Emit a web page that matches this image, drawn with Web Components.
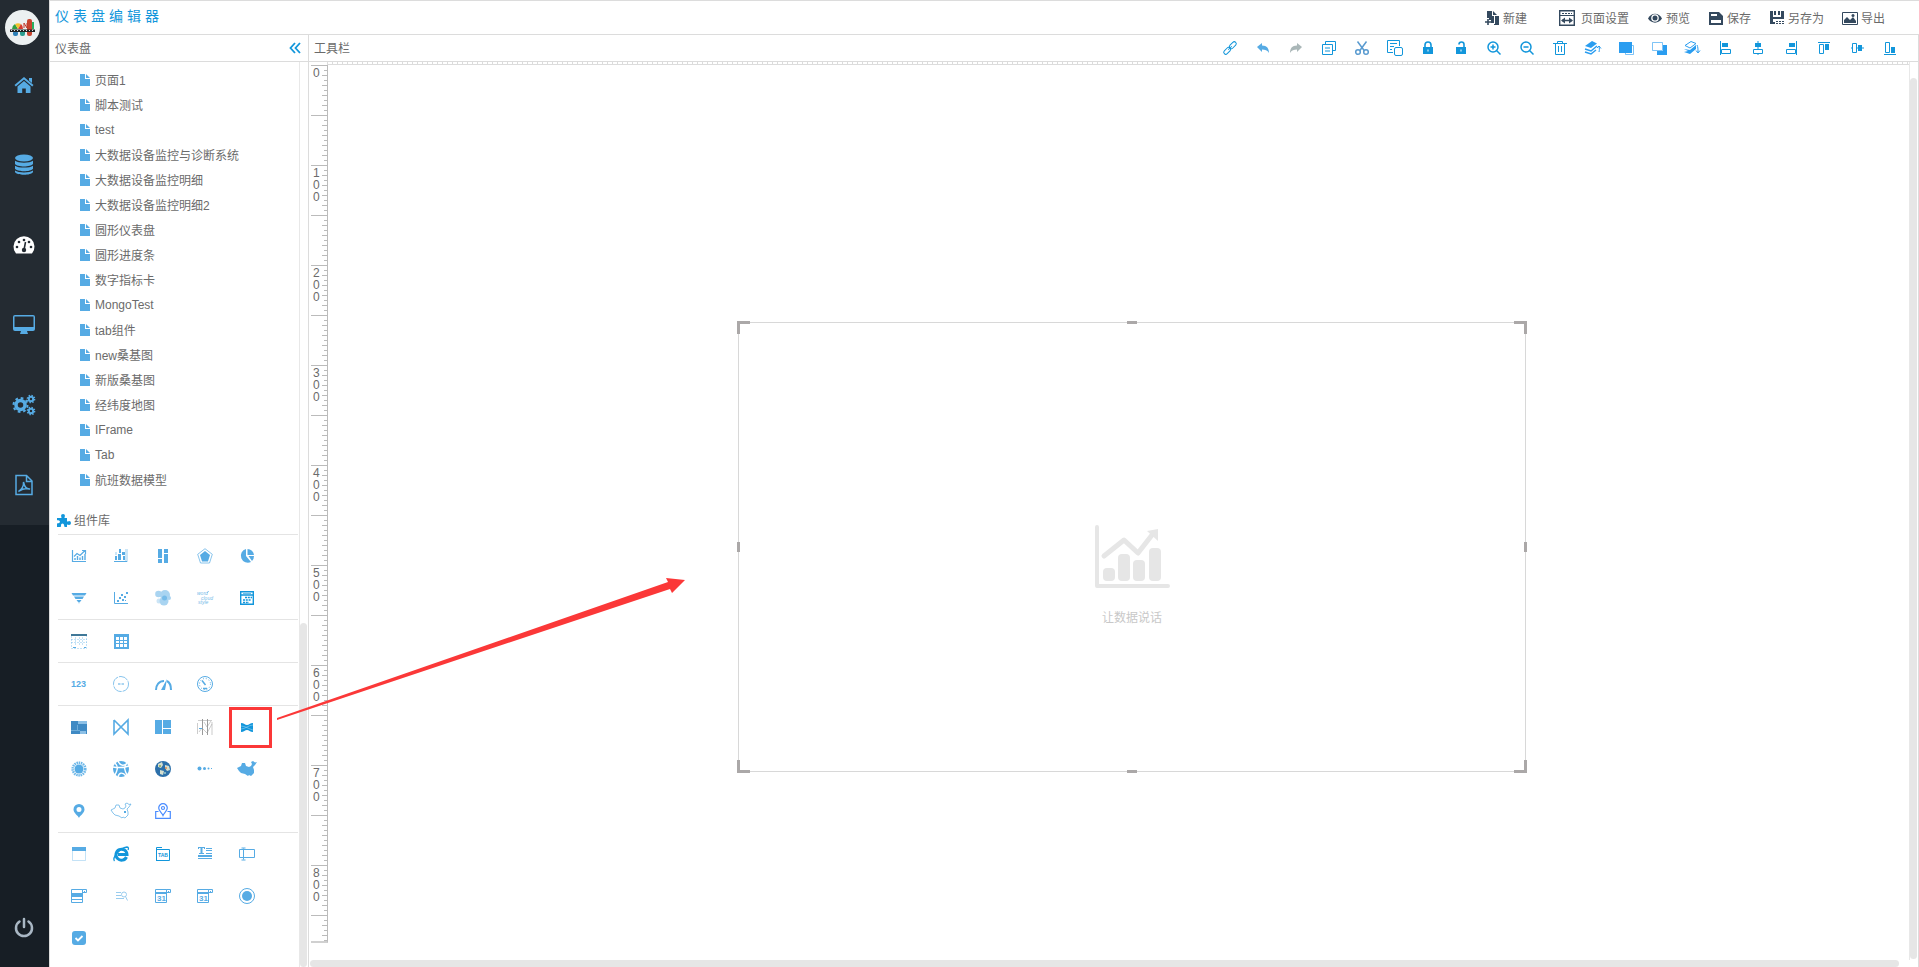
<!DOCTYPE html>
<html lang="zh-CN">
<head>
<meta charset="UTF-8">
<meta name="viewport" content="width=device-width, initial-scale=1">
<title>仪表盘编辑器</title>
<style>
  html, body {
    margin: 0;
    height: 100%;
    overflow: hidden;
  }

  body {
    font-family: "Liberation Sans", "Noto Sans CJK SC", sans-serif;
    font-size: 12px;
    color: #6b6b6b;
    --accent: #56abe4;
    --strong: #1296db;
    --dark: #34495e;
    --line: #dcdcdc;
    --thumb: #e6e6e6;
  }
</style>
</head>
<body>
<dash-app></dash-app>

<script>
// name: [size, markup]. The viewBox is always square and equal to the size.
const ICONS = {
  // side navigation
  logo: [35, `
    <circle cx="17.5" cy="17.5" r="17.5" fill="#ecf0f1"/>
    <path d="M7 19a6 6 0 0 1 3-5l3 5z" fill="#2f9e44"/>
    <path d="M10 14a6 6 0 0 1 6 0l-3 5z" fill="#f2c230"/>
    <path d="M16 14a6 6 0 0 1 2 5h-5z" fill="#d63a2f"/>
    <rect x="8" y="21" width="5" height="5" rx="2" fill="#2c7fb8"/>
    <rect x="15" y="20" width="5" height="6" rx="2" fill="#2a9d8f"/>
    <rect x="22" y="9" width="5" height="17" rx="2" fill="#c8442f"/>
    <path d="M19 18v-5l3 5v-5" fill="none" stroke="#c0392b"/>
    <path d="M28 12v7" stroke="#27ae60" stroke-width="2"/>
    <path d="M5 19.500h25v2.500H5z" fill="#222"/>
    <path d="M6 20.500h24" stroke="#dfe4e6" stroke-dasharray="1 2"/>`],
  home: [24, `<path d="M12 4l9.500 8-1.300 1.400L12 6.600l-8.200 6.800L2.500 12zM17 5h3v5l-3-2.500z"/><path d="M12 8l6.500 5.500V20h-4.700v-4.500h-3.600V20H5.500v-6.500z"/>`],
  data: [24, `<ellipse cx="12" cy="5" rx="9" ry="3.500"/><path d="M3 7.800c3 2.500 15 2.500 18 0V11c-2 3.300-16 3.300-18 0zM3 12.700c3 2.500 15 2.500 18 0v3.100c-2 3.300-16 3.300-18 0zM3 17.500c3 2.500 15 2.500 18 0V19c-2 3.700-16 3.700-18 0z"/>`],
  gauge: [24, `<path d="M4 20.500A10.500 10.500 0 1 1 20 20.500z"/><g fill="#242b32"><circle cx="5" cy="14" r="1.300"/><circle cx="7" cy="9" r="1.300"/><circle cx="12" cy="7" r="1.300"/><circle cx="17" cy="9" r="1.300"/><circle cx="19" cy="14" r="1.300"/><circle cx="12" cy="17" r="2.200"/></g><path d="M12 17l1.500-8" stroke="#242b32" stroke-width="1.500"/>`],
  desktop: [24, `<path d="M3 2h18a2 2 0 0 1 2 2v12a2 2 0 0 1-2 2h-6l1 3H8l1-3H3a2 2 0 0 1-2-2V4a2 2 0 0 1 2-2zm-.500 1.500v10.500h19V3.500z" fill-rule="evenodd"/>`],
  cogs: [24, `<g fill="none"><circle cx="8.500" cy="12" r="4.500" stroke-width="3.500"/><circle cx="8.500" cy="12" r="7" stroke-width="2" stroke-dasharray="2.700 2.800"/><circle cx="19" cy="6" r="2.200" stroke-width="2"/><circle cx="19" cy="6" r="3.600" stroke-width="1.500" stroke-dasharray="1.400 1.430"/><circle cx="19" cy="18" r="2.200" stroke-width="2"/><circle cx="19" cy="18" r="3.600" stroke-width="1.500" stroke-dasharray="1.400 1.430"/></g>`],
  pdf: [24, `<g fill="none" stroke-width="1.500"><path d="M4 2.500h10.500l5.500 5.500v13.500H4zM14.500 2.500v6H20"/><path d="M6.500 18.500c3-1.500 5.500-5.500 5-9.500 1 5 3 7.300 6.500 7-4-1-7.500-.300-11.500 2.500z"/></g>`],
  power: [24, `<g fill="none" stroke-width="2.500" stroke-linecap="round"><path d="M7.500 6.500a8 8 0 1 0 9 0M12 4v8"/></g>`],

  // header
  fresh: [16, `<path d="M3 1h5v5h2v7H7v-3H5V8H3z"/><path d="M9 1l4 4H9zM11 6h4v9h-5v-1h1z"/><path d="M4 9v6M1 12h6" stroke-width="1.600"/>`],
  page: [16, `<path d="M.700.700h14.600v14.600H.700z" fill="none" stroke-width="1.400"/><path d="M1 5.500h14"/><path d="M3 3.500h10" stroke-dasharray="2 1"/><path d="M3 10.500h10" stroke-width="1.500"/><path d="M6 7.500l-4 3 4 3zM10 7.500l4 3-4 3z"/>`],
  eye: [16, `<path d="M1 8.500C4 2 12 2 15 8.500 12 14 4 14 1 8.500z"/><circle cx="8" cy="8" r="3.800" fill="#fff"/><circle cx="8" cy="8" r="2.500"/>`],
  save: [16, `<path d="M1 2h10l4 4v9H1zM3 4v2h6V4zM3 10v3h10v-3z" fill-rule="evenodd"/>`],
  saveas: [16, `<path d="M1 1h3v6h8V1h3v8H4v3h2v2H1zM5 1h2v4H5zM9 1h2v4H9z"/><path d="M7 11h2v1H7zM10 11h2v1h-2zM13 11h2v1h-2zM7 13h2v1H7zM10 13h2v1h-2zM13 13h2v1h-2z"/>`],
  image: [16, `<path d="M.500 2.500h15v12H.500z" fill="none"/><path d="M2 13v-3l3-3 3 3 3-3 3 4v2z"/><circle cx="11" cy="5.500" r="1.500"/>`],

  // toolbar
  collapse: [16, `<path d="M8 3L3.500 8 8 13M13 3L8.500 8 13 13" fill="none" stroke-width="1.800"/>`],
  link: [16, `<g fill="none" transform="rotate(-45 8 8)"><rect x="0" y="6" width="8" height="4" rx="2"/><rect x="8" y="6" width="8" height="4" rx="2"/><path d="M5.500 8h5"/></g>`],
  undo: [16, `<path d="M2 7l5-4v2.500c5 0 7 3 7 7.500-1.500-3-4-3.500-7-3.500V12z"/>`],
  redo: [16, `<path d="M14 7L9 3v2.500C4 5.500 2 8.500 2 13c1.500-3 4-3.500 7-3.500V12z"/>`],
  copy: [16, `<path d="M4.500 4.500V1.500h10v9h-3M1.500 4.500h10v10h-10zM4 8h5M4 11h5" fill="none"/>`],
  cut: [16, `<g fill="none" stroke-width="1.500"><path d="M3.500 1.500L10.500 11M12.500 1.500L5.500 11"/><circle cx="4" cy="12" r="2.300"/><circle cx="12" cy="12" r="2.300"/></g>`],
  paste: [16, `<path d="M6 12.500H.500V.500h12V6M3 3.500h7M3 6.500h4M3 9.500h2" fill="none"/><rect x="7.500" y="7.500" width="8" height="8" rx="1.500" fill="none"/>`],
  lock: [16, `<path d="M3 7h10v7H3z"/><path d="M5 7V5a3 3 0 0 1 6 0v2" fill="none" stroke-width="1.600"/><path d="M8 9.500v2" stroke="#fff"/>`],
  unlock: [16, `<path d="M3 7h10v7H3z"/><path d="M6 4.500a2.500 2.500 0 0 1 5 0V7" fill="none" stroke-width="1.600"/><path d="M8 9.500v2" stroke="#fff"/>`],
  zoomin: [16, `<g fill="none" stroke-width="1.500"><circle cx="7" cy="7" r="5"/><path d="M10.500 10.500l4 4M4.500 7h5M7 4.500v5"/></g>`],
  zoomout: [16, `<g fill="none" stroke-width="1.500"><circle cx="7" cy="7" r="5"/><path d="M10.500 10.500l4 4M4.500 7h5"/></g>`],
  trash: [16, `<path d="M1 3.500h14M5.500 3V1.500h5V3M3.500 4v10.500h9V4M6.500 6v6M9.500 6v6" fill="none"/>`],
  up: [16, `<path d="M0 6l7-5 5 2.500L6 8z"/><path d="M0 9l6 2 6-5M0 12l6 2 5-4" fill="none" stroke-width="1.500"/><path d="M14 12c.500-2 .500-3 0-6M12 8l2-2 2 2.500" fill="none"/>`],
  front: [16, `<path d="M14 5.500h1.500v9h-8V13" fill="none" opacity=".6"/><path d="M1 2h13v11H1z"/>`],
  back: [16, `<path d="M12 5h4v10H6v-4h6z"/><path d="M1.500 2.500h10v8h-10z" fill="none" opacity=".6"/>`],
  down: [16, `<path d="M1 5.500l6-4 5 2-6 4.500z" fill="none"/><path d="M0 9l6 1 6-5v4l-6 5-6-2 4-1z"/><path d="M13 5c1 2 1 4 1 7M12 10.500l2 2.500 2-2.500" fill="none"/>`],
  aleft: [16, `<path d="M3 1h1v14H3zM5 3h6v4H5z"/><path d="M4.500 9.500h9v4h-9z" fill="none"/>`],
  acenter: [16, `<path d="M8 1v14"/><path d="M5 3h6v4H5z"/><path d="M3.500 9.500h9v4h-9z" fill="#fff"/>`],
  aright: [16, `<path d="M13 1h1v14h-1zM6 3h6v4H6z"/><path d="M3.500 9.500h9v4h-9z" fill="none"/>`],
  atop: [16, `<path d="M2 2h12v1H2zM9 4h4v6H9z"/><path d="M3.500 4.500h4v9h-4z" fill="none"/>`],
  amiddle: [16, `<path d="M2 8h13"/><path d="M9 5h4v6H9z"/><path d="M3.500 3.500h4v9h-4z" fill="#fff"/>`],
  abottom: [16, `<path d="M2 14h12v1H2zM9 7h4v6H9z"/><path d="M3.500 2.500h4v10h-4z" fill="none"/>`],

  // panel
  file: [12, `<path d="M1 0h5v5h5v7H1zM7 0v4h4z"/>`],
  puzzle: [16, `<path d="M1 6h4c1 0 .500-1 0-2a2 2 0 1 1 4 0c-.500 1-1 2 0 2h2v3c0 1 1 .500 2 0a2 2 0 1 1 0 4c-1-.500-2-1-2 0v2H9c-1 0-.500-1-1-2a1.500 1.500 0 0 0-3 0c0 1 .500 2-1 2H1v-3c0-1 1-.500 2-1a1.300 1.300 0 0 0 0-2.500C2 8 1 8.500 1 8z"/>`],

  // component library
  line: [16, `<path d="M1.500 2v11.500H15" fill="none" stroke-width="1.200"/><path d="M3 8.500l3-3 3 2 5-5M11 2.500h3.500V6" fill="none" stroke-width="1.200"/><path d="M4 12v-2M6.500 12V8M9 12V9.500M11.500 12V8M14 12V6" stroke-width="1.400"/>`],
  stack: [16, `<path d="M1 13h13v1H1z"/><path d="M2 8h2v4H2zM6 1h2v4H6zM5 6h3v6H5zM9 4h3v3H9zM10 8h2v4h-2z"/><path d="M2 4h2v3H2zM12 1h3v13h-3z" opacity=".3"/>`],
  blocks: [16, `<path d="M3 1h4v9H3zM3 11h4v4H3zM9 1h4v4H9zM9 6h4v9H9z"/>`],
  radar: [16, `<path d="M8 .700l7.300 5.600L12.500 15h-9L.700 6.300z" fill="none" opacity=".7"/><path d="M8 3l5 4-2 6.500H5L3 7z"/>`],
  pie: [16, `<path d="M7 1v7l5 6a7 7 0 1 1-5-13z"/><path d="M8.500 1a6.500 6.500 0 0 1 6.500 6L8.500 7zM9.500 8H15a7 7 0 0 1-2 5z"/>`],
  funnel: [16, `<path d="M.500 3h15L14 5.500H2zM3 6.500h10L11.500 9h-7zM5.500 10h5L9 12H7zM7 12.500h2l-1 1z"/>`],
  scatter: [16, `<path d="M1.500 2v11.500H15" fill="none"/><path d="M4 10h2v2H4zM6 7h2v2H6zM9 9h2v2H9zM8 4h2v2H8zM11 6h2v2h-2zM13 2h2v2h-2zM12 10h1v1h-1z"/>`],
  bubble: [16, `<g opacity=".5"><circle cx="3.500" cy="4" r="3.300"/><circle cx="10" cy="5" r="5"/><circle cx="9" cy="11" r="4.500"/><circle cx="4" cy="11" r="2.500" opacity=".6"/><circle cx="14" cy="8" r="2"/></g><circle cx="9.500" cy="8" r="2.500" opacity=".6"/>`],
  cloud: [16, `<g stroke="none" font-size="5" font-style="italic" opacity=".8"><text x="0" y="5">word</text><text x="4" y="10">cloud</text><text x="1" y="14">style</text></g><path d="M10 3l2-2" opacity=".5"/>`],
  calendar: [16, `<path d="M1.700 1.700h12.600v12.600H1.700zM2 5h12" fill="none" stroke-width="1.400"/><path d="M4 3.500h8" opacity=".6"/><path d="M6 7.500h7M4 10h8M4 12.500h6" stroke-width="1.500" stroke-dasharray="2 .8"/>`],
  sheet: [16, `<path d="M0 1h16v2H0z" fill="#3f7898" stroke="none"/><g opacity=".35" fill="none"><path d="M.500 3v12.500h15V3M0 6.500h16M0 9.500h16M4.500 4v8M8.500 4v8M11.500 4v8" stroke-dasharray="2 1"/></g><path d="M2 14.500h3M13 14.500h2" />`],
  table: [16, `<path d="M1 1h15v15H1zM3 4v3h3V4zM7 4v3h3V4zM11 4v3h3V4zM3 8v2h3V8zM7 8v2h3V8zM11 8v2h3V8zM3 11v3h3v-3zM7 11v3h3v-3zM11 11v3h3v-3z" fill-rule="evenodd"/>`],
  number: [16, `<text x="0" y="11" font-size="9" font-weight="bold">123</text>`],
  ring: [16, `<circle cx="8" cy="8" r="7.500" fill="none" opacity=".7" stroke-dasharray="10 1"/><path d="M5 8h2.500M8.500 8H11" />`],
  meter: [16, `<path d="M1 14c0-5 3-9 8-9" fill="none" stroke-width="2"/><path d="M12 5c2 1 4 4 4 9" fill="none" stroke-width="2"/><path d="M6 14l6-11-2 11z"/>`],
  dial: [16, `<circle cx="8" cy="8" r="7.500" fill="none"/><circle cx="8" cy="8" r="5.500" fill="none" stroke-dasharray="1 1.900"/><path d="M5 4.500L8.500 9M6 12.500h4" stroke-width="1.500"/>`],
  treemap: [16, `<path d="M0 2h16v13H0z" fill="#3f8ac4" stroke="none"/><path d="M7 2h9v3H7zM9 12h6v3H9z" fill="#8cc0e6" stroke="none"/><path d="M0 11.500h9M6.500 6v6" stroke="#6fadd9" fill="none"/>`],
  bowtie: [16, `<path d="M1 1v14L15 1v14L1 1" fill="none" stroke-width="1.600"/>`],
  layout: [16, `<path d="M0 1h7v14H0zM8 1h8v8H8zM8 10h8v5H8z"/>`],
  parallel: [16, `<g stroke="#9a9a9a" fill="none"><path d="M5.500 0v16M10.500 0v16" stroke-width="1"/><path d="M1 1.500h14M.500 4v11M15 3v13M2 13l3-4 5 5 5-9M7 3l3 5 4-6" opacity=".5"/></g><path d="M2 9.500h3"/>`],
  sankey: [16, `<path d="M2 4c3 0 4 2 6 2s3-2 6-2v9c-3 0-4-2-6-2s-3 2-6 2z"/><path d="M2 7c4 0 8 3 12 4M2 10c4 0 8-4 12-4" stroke="#8ed0f4" fill="none" stroke-width=".6"/>`],
  sunburst: [16, `<circle cx="8" cy="8" r="4.500"/><circle cx="8" cy="8" r="6.300" fill="none" stroke-width="2.600" stroke-dasharray="1.500 .7" opacity=".85"/>`],
  chord: [16, `<circle cx="8" cy="8" r="8" stroke="none"/><g stroke="#fff" fill="none" stroke-width="1.400"><path d="M2 2c4 4 2 8 0 12M14 2c-4 4-2 8 0 12M5 0c2 5 6 5 8 3M0 6c6 1 10 1 16-1M5 16c1-5 5-5 8-1"/></g>`],
  globe: [16, `<circle cx="8" cy="8" r="8" fill="#2c70aa" stroke="none"/><path d="M3 3l4-2 1 3-2 3-3-1zM10 4l4 1 1 4-3 1-2-3zM5 9l4 1-1 4-3-1z" fill="#d5dfd0" stroke="none"/><circle cx="11" cy="7" r="1" fill="#e38b4a" stroke="none"/><circle cx="5" cy="5" r="1" fill="#85a857" stroke="none"/><circle cx="10" cy="12" r="1" fill="#9cc" stroke="none"/>`],
  dots: [16, `<circle cx="2.500" cy="7.500" r="2"/><circle cx="7.500" cy="7.500" r="1.500"/><circle cx="11.500" cy="7.500" r="1"/><path d="M14 7h1v1h-1z"/>`],
  china: [20, `<path d="M0 9l4-2 1-3 3 0 1 3 3 1 2-1 1-2-1-2 2-1 2 1.500 2-.500-2 3-2 2 1 3 0 3-3 3-2-1-1 1-3-2-4-1-2-2z"/>`],
  pin: [16, `<path d="M8 1a5.500 5.500 0 0 1 5.500 5.500C13.500 10 9 12.500 8 15c-1-2.500-5.500-5-5.500-8.500A5.500 5.500 0 0 1 8 1zm0 3a2.500 2.500 0 1 0 0 5 2.500 2.500 0 0 0 0-5z"/>`],
  chinaline: [20, `<path d="M0 9l4-2 1-3 3 0 1 3 3 1 2-1 1-2-1-2 2-1 2 1.500 2-.500-2 3-2 2 1 3 0 3-3 3-2-1-1 1-3-2-4-1-2-2z" fill="none" opacity=".7"/><path d="M13 10h2v2h-2z"/>`],
  pintray: [16, `<g fill="none" stroke-width="1.200"><path d="M3.500 8.500H.700v6.800h14.600V8.500h-2.800"/><path d="M8 .700a4.300 4.300 0 0 1 4.300 4.300C12.300 8 9 10 8 12.500 7 10 3.700 8 3.700 5A4.300 4.300 0 0 1 8 .700z"/><circle cx="8" cy="5" r="1.500"/></g>`],
  panel: [16, `<path d="M1.500 5v9.500h13V5" fill="none" opacity=".35"/><path d="M1 1h14v4H1z"/>`],
  iframe: [16, `<path d="M13.500 11a5.500 5.500 0 1 1 .500-2.500H5" fill="none" stroke-width="3"/><path d="M1.500 15C-1 12 6 2 14 1c2 0 1.500 2 1 3" fill="none" stroke-width="1.300"/>`],
  tab: [16, `<path d="M1.500 15V1.500H7M1.500 3.500h13v11h-13z" fill="none"/><text x="3" y="11" font-size="5" font-weight="bold" stroke="none">TAB</text>`],
  text: [16, `<path d="M1 1h7v2H7V2H5.500v5H7v1H2V7h1.500V2H2v1H1z"/><path d="M9 2h6v1H9zM9 4h6v1H9zM9 7h6v1H9zM1 9h14v2H1zM1 12h14v1H1z"/>`],
  input: [16, `<path d="M.500 3.500h15v8H.500zM4.500 2.500v11M2.500 2h4M2.500 14h4" fill="none"/>`],
  select: [16, `<path d="M.500 1.500h11v13H.500zM11.500 1.500h4v3h-4zM0 11.500h12" fill="none"/><path d="M1 5h11v4H1zM13 3h1v1h-1z"/>`],
  find: [16, `<g opacity=".6" fill="none"><path d="M3 4.500h5M3 7.500h5M3 10.500h8"/><circle cx="11" cy="6.500" r="2.500"/><path d="M12.500 8.500l2 4"/></g>`],
  date: [16, `<path d="M.500 1.500h11v13H.500zM11.500 1.500h4v3h-4z" fill="none"/><path d="M1 4h11v2H1zM13 3h1v1h-1z"/><text x="2" y="13" font-size="8" font-weight="bold" stroke="none">31</text>`],
  radio: [16, `<circle cx="8" cy="8" r="7.500" fill="none"/><circle cx="8" cy="8" r="5"/>`],
  check: [16, `<rect x="1" y="1" width="14" height="14" rx="3"/><path d="M4.500 8l2.500 2.500L11.500 6" stroke="#fff" stroke-width="1.800" fill="none"/>`]
};

class UiIcon extends HTMLElement {
  constructor() {
    super();
    this.attachShadow({ mode: "open" });
  }

  connectedCallback() {
    const [size, markup] = ICONS[this.getAttribute("name")];
    this.shadowRoot.innerHTML = /* html */`
    <style>
      :host { display: block; flex: none; }
      svg { display: block; overflow: visible; fill: currentColor; }
      .ink { stroke: currentColor; }
    </style>
    <svg width="${size}" height="${size}" viewBox="0 0 ${size} ${size}" aria-hidden="true">${UiIcon.ink(markup)}</svg>`;
  }

  // solid shapes carry no outline: only unfilled ones and bare strokes do
  static ink(markup) {
    const box = document.createElement("template");
    box.innerHTML = `<svg>${markup}</svg>`;
    box.content.querySelectorAll("path, circle, rect, ellipse").forEach((el) => {
      const hollow = el.closest('[fill="none"]');
      const thin = el.tagName === "path" && !/z/i.test(el.getAttribute("d"));
      const outlined = el.getAttribute("fill") === "#fff" && el.tagName === "path";
      if (!el.closest("[stroke]") && (hollow || thin || outlined)) {
        el.setAttribute("class", "ink");
      }
    });
    return box.content.firstChild.innerHTML;
  }
}

class SideNav extends HTMLElement {
  constructor() {
    super();
    this.attachShadow({ mode: "open" });
  }

  static get styles() {
    return /* css */`
      :host {
        display: flex;
        flex-direction: column;
        justify-content: space-between;
        background: #171e25;
        color: var(--accent);
        border-right: 1px solid var(--line);
      }

      nav {
        background: #242b32;
        display: flex;
        flex-direction: column;
      }

      .logo {
        height: 45px;
        padding: 10px 5px 0;
        box-sizing: border-box;
      }

      a, button {
        height: 80px;
        display: flex;
        align-items: center;
        justify-content: center;
        color: inherit;
        background: none;
        border: 0;
        padding: 0 1px 0 0;
      }

      a[aria-current] { color: #fff; }
      button { color: #a9b7c4; }
    `;
  }

  connectedCallback() {
    const items = [["home", "首页"], ["data", "数据"], ["gauge", "仪表盘"], ["desktop", "大屏"], ["cogs", "设置"], ["pdf", "报表"]];
    this.shadowRoot.innerHTML = /* html */`
    <style>${SideNav.styles}</style>
    <nav>
      <div class="logo"><ui-icon name="logo"></ui-icon></div>
      ${items.map(([icon, label]) => `<a href="#${icon}" aria-label="${label}" ${icon === "gauge" ? 'aria-current="page"' : ""}><ui-icon name="${icon}"></ui-icon></a>`).join("")}
    </nav>
    <button type="button" aria-label="退出"><ui-icon name="power"></ui-icon></button>`;
  }
}

class AppHeader extends HTMLElement {
  constructor() {
    super();
    this.attachShadow({ mode: "open" });
  }

  static get styles() {
    return /* css */`
      :host {
        display: flex;
        align-items: center;
        justify-content: space-between;
        height: 35px;
        box-sizing: border-box;
        border: solid var(--line);
        border-width: 1px 0;
        padding: 0 34px 0 5px;
      }

      h1 {
        margin: 0 0 6px;
        font-size: 14px;
        font-weight: normal;
        letter-spacing: 4px;
        color: var(--strong);
      }

      .actions {
        display: flex;
        gap: 18px;
      }

      button {
        display: flex;
        align-items: center;
        gap: 3px;
        border: 0;
        padding: 0;
        background: none;
        font: inherit;
        color: inherit;
      }

      .wide { gap: 6px; }
      button:first-child { margin-right: 14px; }
      ui-icon { color: var(--dark); }
    `;
  }

  connectedCallback() {
    const items = [["fresh", "新建"], ["page", "页面设置"], ["eye", "预览"], ["save", "保存"], ["saveas", "另存为"], ["image", "导出"]];
    this.shadowRoot.innerHTML = /* html */`
    <style>${AppHeader.styles}</style>
    <h1><slot></slot></h1>
    <div class="actions">
      ${items.map(([icon, label]) => `<button type="button" class="${icon === "page" ? "wide" : ""}"><ui-icon name="${icon}"></ui-icon>${label}</button>`).join("")}
    </div>`;
  }
}

class PanelHead extends HTMLElement {
  constructor() {
    super();
    this.attachShadow({ mode: "open" });
    this.shadowRoot.innerHTML = /* html */`
    <style>
      :host {
        display: flex;
        align-items: center;
        justify-content: space-between;
        flex: none;
        height: 27px;
        box-sizing: border-box;
        border-bottom: 1px solid var(--line);
        padding-left: 5px;
      }

      h2 {
        margin: 0 0 2px;
        font-size: 12px;
        font-weight: normal;
      }
    </style>
    <h2><slot></slot></h2>
    <slot name="tools"></slot>`;
  }
}

class PageTree extends HTMLElement {
  constructor() {
    super();
    this.attachShadow({ mode: "open" });
  }

  connectedCallback() {
    const pages = ["页面1", "脚本测试", "test", "大数据设备监控与诊断系统", "大数据设备监控明细", "大数据设备监控明细2",
      "圆形仪表盘", "圆形进度条", "数字指标卡", "MongoTest", "tab组件", "new桑基图", "新版桑基图", "经纬度地图",
      "IFrame", "Tab", "航班数据模型"];
    this.shadowRoot.innerHTML = /* html */`
    <style>
      :host { display: block; padding: 5px 0 15px 29px; }
      ul { list-style: none; margin: 0; padding: 0; }
      a {
        display: flex;
        align-items: center;
        gap: 4px;
        height: 25px;
        color: inherit;
        text-decoration: none;
      }
      ui-icon { color: var(--accent); }
    </style>
    <ul>${pages.map((page) => `<li><a href="#"><ui-icon name="file"></ui-icon>${page}</a></li>`).join("")}</ul>`;
  }
}

class ComponentLibrary extends HTMLElement {
  constructor() {
    super();
    this.attachShadow({ mode: "open" });
  }

  static get styles() {
    return /* css */`
      :host {
        display: block;
        padding: 0 1px 0 8px;
      }

      h3 {
        display: flex;
        align-items: center;
        gap: 2px;
        height: 25px;
        margin: 0 0 0 -2px;
        padding-bottom: 2px;
        font-size: 12px;
        font-weight: normal;
      }

      h3 ui-icon { color: var(--strong); }

      .group {
        display: grid;
        grid-template-columns: repeat(5, 42px);
        grid-auto-rows: 42px;
        border-top: 1px solid #e4e4e4;
      }

      button {
        display: grid;
        place-items: center;
        position: relative;
        padding: 0;
        border: 0;
        background: none;
        color: var(--accent);
        font: inherit;
      }

      .strong { color: var(--strong); }
      .vivid { color: #4a8cff; }

      .marked::after {
        content: "";
        position: absolute;
        inset: 1px -4px 0 3px;
        border: 3px solid #fb3838;
      }
    `;
  }

  connectedCallback() {
    const groups = [
      ["line", "stack", "blocks", "radar", "pie", "funnel", "scatter", "bubble", "cloud", "calendar"],
      ["sheet", "table"],
      ["number", "ring", "meter", "dial"],
      ["treemap", "bowtie", "layout", "parallel", "sankey", "sunburst", "chord", "globe", "dots", "china", "pin", "chinaline", "pintray"],
      ["panel", "iframe", "tab", "text", "input", "select", "find", "date", "date", "radio", "check"]
    ];
    const tone = { calendar: "strong", sankey: "strong marked", iframe: "strong", tab: "strong", pintray: "vivid" };
    this.shadowRoot.innerHTML = /* html */`
    <style>${ComponentLibrary.styles}</style>
    <h3><ui-icon name="puzzle"></ui-icon>组件库</h3>
    ${groups.map((group) => `<div class="group">${group.map((name) => `<button type="button" aria-label="${name}" class="${tone[name] ?? ""}"><ui-icon name="${name}"></ui-icon></button>`).join("")}</div>`).join("")}`;
  }
}

class SidePanel extends HTMLElement {
  constructor() {
    super();
    this.attachShadow({ mode: "open" });
    this.shadowRoot.innerHTML = /* html */`
    <style>
      :host {
        display: flex;
        flex-direction: column;
        width: 259px;
        box-sizing: border-box;
        border-right: 1px solid var(--line);
        min-height: 0;
      }

      .body {
        flex: 1;
        display: flex;
        min-height: 0;
      }

      .content {
        flex: 1;
        overflow: hidden;
      }

      .track {
        width: 8px;
        display: flex;
        flex-direction: column;
        border-left: 1px solid #e8e8e8;
      }

      .rest { flex: 62; }
      .thumb {
        flex: 38;
        width: 7px;
        border-radius: 4px;
        background: var(--thumb);
      }

      button {
        border: 0;
        background: none;
        padding: 0 5px;
        color: var(--strong);
      }
    </style>
    <panel-head>仪表盘<button slot="tools" type="button" aria-label="收起"><ui-icon name="collapse"></ui-icon></button></panel-head>
    <div class="body">
      <div class="content"><slot></slot></div>
      <div class="track"><div class="rest"></div><div class="thumb"></div></div>
    </div>`;
  }
}

class ToolBar extends HTMLElement {
  constructor() {
    super();
    this.attachShadow({ mode: "open" });
  }

  connectedCallback() {
    const tools = ["link", "undo", "redo", "copy", "cut", "paste", "lock", "unlock", "zoomin", "zoomout", "trash",
      "up", "front", "back", "down", "aleft", "acenter", "aright", "atop", "amiddle", "abottom"];
    this.shadowRoot.innerHTML = /* html */`
    <style>
      :host { display: flex; padding-right: 12px; }
      button {
        width: 33px;
        height: 26px;
        display: grid;
        place-items: center;
        border: 0;
        padding: 0;
        background: none;
        color: var(--strong);
      }
      .undo { color: var(--accent); }
      .cut { color: #5a9bd0; }
      .redo { color: #aab7b8; }
      .front, .back, .up, .down { color: #2a9df0; }
    </style>
    ${tools.map((name) => `<button type="button" class="${name}" aria-label="${name}"><ui-icon name="${name}"></ui-icon></button>`).join("")}`;
  }
}

class RulerY extends HTMLElement {
  constructor() {
    super();
    this.attachShadow({ mode: "open" });
  }

  connectedCallback() {
    const marks = [0, 100, 200, 300, 400, 500, 600, 700, 800];
    this.shadowRoot.innerHTML = /* html */`
    <style>
      :host {
        display: block;
        overflow: hidden;
        border-right: 1px solid #bbb;
        border-bottom: 2px solid #d0d0d0;
        background:
          repeating-linear-gradient(#bbb 0 1px, transparent 1px 50px),
          repeating-linear-gradient(#bbb 0 1px, transparent 1px 10px) right / 5px 100% no-repeat,
          repeating-linear-gradient(#bbb 0 1px, transparent 1px 5px) right / 3px 100% no-repeat;
      }

      div {
        width: 7px;
        height: 98px;
        padding: 2px 2px 0;
        line-height: 12px;
        word-break: break-all;
      }
    </style>
    ${marks.map((mark) => `<div>${mark}</div>`).join("")}`;
  }
}

class ArtBoard extends HTMLElement {
  constructor() {
    super();
    this.attachShadow({ mode: "open" });
    this.shadowRoot.innerHTML = /* html */`
    <style>
      :host {
        display: flex;
        flex-direction: column;
        align-items: center;
        justify-content: center;
        gap: 20px;
        position: relative;
        box-sizing: border-box;
        width: 49%;
        aspect-ratio: 7 / 4;
        padding-top: 54px;
        border: 1px solid #d8d8d8;
        color: #c8c8c8;
      }

      svg { display: block; }

      i {
        position: absolute;
        width: 10px;
        height: 10px;
        border: 0 solid #aba8a8;
      }

      .n { top: -2px; border-top-width: 3px; }
      .s { bottom: -2px; border-bottom-width: 3px; }
      .w { left: -2px; border-left-width: 3px; }
      .e { right: -2px; border-right-width: 3px; }
      .x { left: calc(50% - 5px); }
      .y { top: calc(50% - 5px); }
    </style>
    <i class="n w"></i><i class="n x"></i><i class="n e"></i>
    <i class="w y"></i><i class="e y"></i>
    <i class="s w"></i><i class="s x"></i><i class="s e"></i>
    <svg width="76" height="64" viewBox="0 0 76 64" fill="#e6e6e6" aria-hidden="true">
      <path d="M3 3v59h71" fill="none" stroke="#e6e6e6" stroke-width="4" stroke-linecap="round" stroke-linejoin="round"/>
      <rect x="9" y="44" width="12" height="13" rx="4"/>
      <rect x="24" y="30" width="12" height="27" rx="4"/>
      <rect x="39" y="36" width="12" height="21" rx="4"/>
      <rect x="55" y="24" width="12" height="33" rx="4"/>
      <path d="M10 32l20-16 14 13 14-18" fill="none" stroke="#e6e6e6" stroke-width="5" stroke-linecap="round" stroke-linejoin="round"/>
      <path d="M53 7l11-2v12z"/>
    </svg>
    <slot></slot>`;
  }
}

class WorkSpace extends HTMLElement {
  constructor() {
    super();
    this.attachShadow({ mode: "open" });
    this.shadowRoot.innerHTML = /* html */`
    <style>
      :host {
        display: flex;
        flex-direction: column;
        flex: 1;
        min-width: 0;
        min-height: 0;
        border-right: 1px solid var(--line);
      }

      .body {
        flex: 1;
        display: grid;
        grid-template-columns: 19px 1fr 9px;
        grid-template-rows: 3px 1fr 7px;
        min-height: 0;
      }

      .ruler-x {
        grid-column: 2;
        border-bottom: 1px solid var(--line);
        border-left: 1px solid var(--line);
        margin-left: -1px;
        background: repeating-linear-gradient(to right, transparent 0 4px, var(--line) 4px 5px);
      }

      ruler-y {
        grid-area: 2 / 1;
        margin: 0 0 17px 2px;
      }

      .viewport {
        grid-area: 2 / 2;
        overflow: hidden;
      }

      /* the canvas is larger than its viewport on both axes */
      .stage {
        width: calc(100% + 27px);
        height: calc(100% + 69px);
        display: grid;
        place-items: center;
      }

      .bar-y {
        grid-area: 1 / 3 / 3 / 4;
        border-left: 1px solid #e8e8e8;
        padding: 16px 0 1px;
        display: grid;
      }

      .bar-x {
        grid-area: 3 / 1 / 4 / 3;
        padding: 0 10px 0 1px;
        display: grid;
      }

      .thumb {
        border-radius: 4px;
        background: var(--thumb);
      }

      .bar-y .thumb { margin-right: 1px; }
    </style>
    <panel-head>工具栏<tool-bar slot="tools"></tool-bar></panel-head>
    <div class="body">
      <div class="ruler-x"></div>
      <ruler-y></ruler-y>
      <div class="viewport"><div class="stage"><slot></slot></div></div>
      <div class="bar-y"><div class="thumb"></div></div>
      <div class="bar-x"><div class="thumb"></div></div>
    </div>`;
  }
}

class DashApp extends HTMLElement {
  constructor() {
    super();
    this.attachShadow({ mode: "open" });
    this.shadowRoot.innerHTML = /* html */`
    <style>
      :host {
        display: grid;
        grid-template-columns: 50px 1fr;
        height: 100vh;
        position: relative;
        background: #fff;
      }

      main {
        display: flex;
        flex-direction: column;
        min-width: 0;
        min-height: 0;
      }

      .columns {
        flex: 1;
        display: flex;
        min-height: 0;
      }

      /* pointer from the palette entry to the canvas */
      .pointer {
        position: absolute;
        left: 277px;
        top: 578px;
        pointer-events: none;
      }
    </style>
    <side-nav></side-nav>
    <main>
      <app-header>仪表盘编辑器</app-header>
      <div class="columns">
        <side-panel>
          <page-tree></page-tree>
          <component-library></component-library>
        </side-panel>
        <work-space><art-board>让数据说话</art-board></work-space>
      </div>
    </main>
    <svg class="pointer" width="408" height="142" viewBox="0 0 408 142" fill="#fb3838" aria-hidden="true">
      <path d="M0 140L391 4 389 0 408 2 395 15 393 11 0 142z"/>
    </svg>`;
  }
}

customElements.define("ui-icon", UiIcon);
customElements.define("side-nav", SideNav);
customElements.define("app-header", AppHeader);
customElements.define("panel-head", PanelHead);
customElements.define("page-tree", PageTree);
customElements.define("component-library", ComponentLibrary);
customElements.define("side-panel", SidePanel);
customElements.define("tool-bar", ToolBar);
customElements.define("ruler-y", RulerY);
customElements.define("art-board", ArtBoard);
customElements.define("work-space", WorkSpace);
customElements.define("dash-app", DashApp);
</script>
</body>
</html>
